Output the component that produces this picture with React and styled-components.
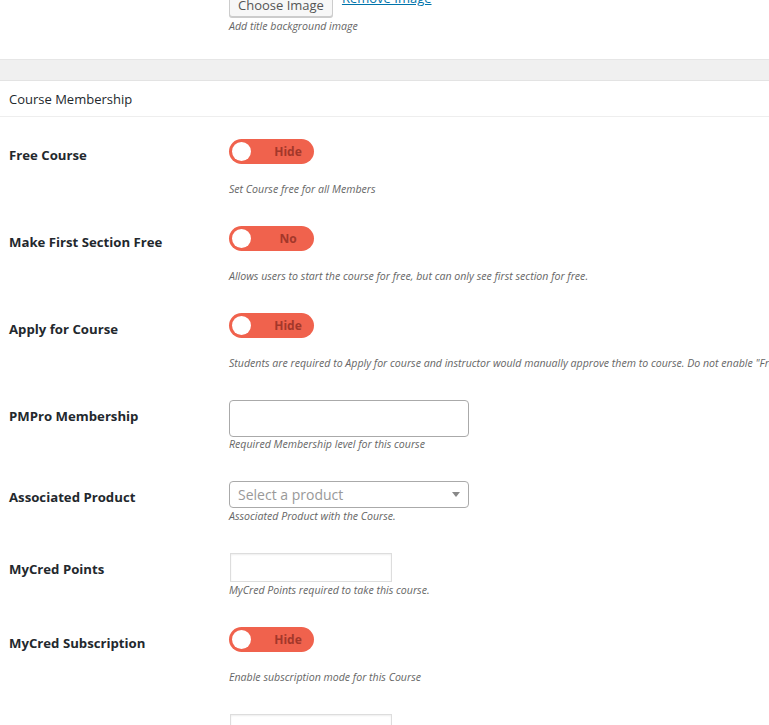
import React from "react";
import styled, { createGlobalStyle } from "styled-components";

const Global = createGlobalStyle`
  html, body { margin: 0; padding: 0; background: #fff; }
  body { font-family: "Open Sans", "Noto Sans", sans-serif; color: #23282d; overflow: hidden; }
`;

const Page = styled.div`
  width: 769px;
  height: 725px;
  overflow: hidden;
`;

const TopSection = styled.div`
  display: flex;
  margin-top: -11px;
  padding-bottom: 26px;
`;

const Row = styled.div`
  display: flex;
  align-items: flex-start;
  padding-bottom: ${(p) => p.$gap || 30}px;
`;

const Label = styled.div`
  width: 220px;
  flex: none;
  padding-left: 9px;
  padding-top: 7px;
  font-size: 13.2px;
  line-height: 18px;
  font-weight: 700;
  color: #23282d;
`;

const Spacer = styled.div`
  width: 229px;
  flex: none;
`;

const Control = styled.div`
  display: flex;
  flex-direction: column;
  align-items: flex-start;
`;

const ButtonLine = styled.div`
  display: flex;
  align-items: flex-start;
  gap: 9px;
`;

const Button = styled.button`
  height: 28px;
  padding: 3px 8px 0;
  font-family: "Open Sans", sans-serif;
  font-size: 13px;
  color: #555;
  background: #f7f7f7;
  border: 1px solid #ccc;
  border-radius: 3px;
  box-shadow: 0 1px 0 #ccc;
`;

const LinkText = styled.a`
  font-size: 13px;
  line-height: 14px;
  color: #0073aa;
  text-decoration: underline;
  margin-top: 2px;
`;

const Desc = styled.div`
  font-size: 10.6px;
  line-height: 14px;
  font-style: italic;
  color: #666;
  margin-top: ${(p) => p.$mt || 0}px;
  white-space: nowrap;
`;

const Band = styled.div`
  height: 20px;
  background: #f0f0f0;
  border-top: 1px solid #e6e6e6;
  border-bottom: 1px solid #e3e3e3;
`;

const Heading = styled.div`
  height: 35px;
  display: flex;
  align-items: center;
  padding-left: 9px;
  font-size: 13px;
  color: #23282d;
  border-bottom: 1px solid #eee;
  margin-bottom: 22px;
`;

const Toggle = styled.div`
  position: relative;
  width: 85px;
  height: 25px;
  border-radius: 13px;
  background: #f0624d;
  display: flex;
  align-items: center;
  justify-content: center;
  padding-left: 33px;
  box-sizing: border-box;
  font-size: 12px;
  font-weight: 700;
  color: #a3372a;
`;

const Knob = styled.span`
  position: absolute;
  left: 3px;
  top: 3px;
  width: 19px;
  height: 19px;
  border-radius: 50%;
  background: #fff;
`;

const TextInput = styled.div`
  width: ${(p) => p.$w}px;
  height: ${(p) => p.$h}px;
  box-sizing: border-box;
  border: 1px solid ${(p) => p.$border};
  border-radius: ${(p) => p.$r}px;
  margin-left: ${(p) => p.$ml || 0}px;
  background: #fff;
  box-shadow: ${(p) => (p.$inset ? "inset 0 1px 2px rgba(0,0,0,0.07)" : "none")};
`;

const Select = styled.div`
  width: 240px;
  height: 27px;
  box-sizing: border-box;
  border: 1px solid #aaa;
  border-radius: 4px;
  display: flex;
  align-items: center;
  justify-content: space-between;
  padding: 0 8px;
  font-size: 14px;
  color: #999;
`;

const Arrow = styled.span`
  width: 0;
  height: 0;
  border-left: 4px solid transparent;
  border-right: 4px solid transparent;
  border-top: 5px solid #888;
`;

const ToggleRow = ({ label, value, desc }) => (
  <Row>
    <Label>{label}</Label>
    <Control>
      <Toggle>
        <Knob />
        {value}
      </Toggle>
      <Desc $mt={18}>{desc}</Desc>
    </Control>
  </Row>
);

export default function App() {
  return (
    <Page>
      <Global />
      <TopSection>
        <Spacer />
        <Control>
          <ButtonLine>
            <Button>Choose Image</Button>
            <LinkText>Remove Image</LinkText>
          </ButtonLine>
          <Desc $mt={2}>Add title background image</Desc>
        </Control>
      </TopSection>
      <Band />
      <Heading>Course Membership</Heading>
      <ToggleRow label="Free Course" value="Hide" desc="Set Course free for all Members" />
      <ToggleRow
        label="Make First Section Free"
        value="No"
        desc="Allows users to start the course for free, but can only see first section for free."
      />
      <ToggleRow
        label="Apply for Course"
        value="Hide"
        desc={'Students are required to Apply for course and instructor would manually approve them to course. Do not enable "Free course" with this option.'}
      />
      <Row>
        <Label>PMPro Membership</Label>
        <Control>
          <TextInput $w={240} $h={37} $border="#aaa" $r={4} />
          <Desc>Required Membership level for this course</Desc>
        </Control>
      </Row>
      <Row>
        <Label>Associated Product</Label>
        <Control>
          <Select>
            Select a product
            <Arrow />
          </Select>
          <Desc $mt={1}>Associated Product with the Course.</Desc>
        </Control>
      </Row>
      <Row>
        <Label>MyCred Points</Label>
        <Control>
          <TextInput $w={162} $h={29} $border="#ddd" $r={0} $ml={1} $inset />
          <Desc $mt={1}>MyCred Points required to take this course.</Desc>
        </Control>
      </Row>
      <ToggleRow label="MyCred Subscription" value="Hide" desc="Enable subscription mode for this Course" />
      <Row>
        <Spacer />
        <Control>
          <TextInput $w={162} $h={29} $border="#ddd" $r={0} $ml={1} $inset />
        </Control>
      </Row>
    </Page>
  );
}
